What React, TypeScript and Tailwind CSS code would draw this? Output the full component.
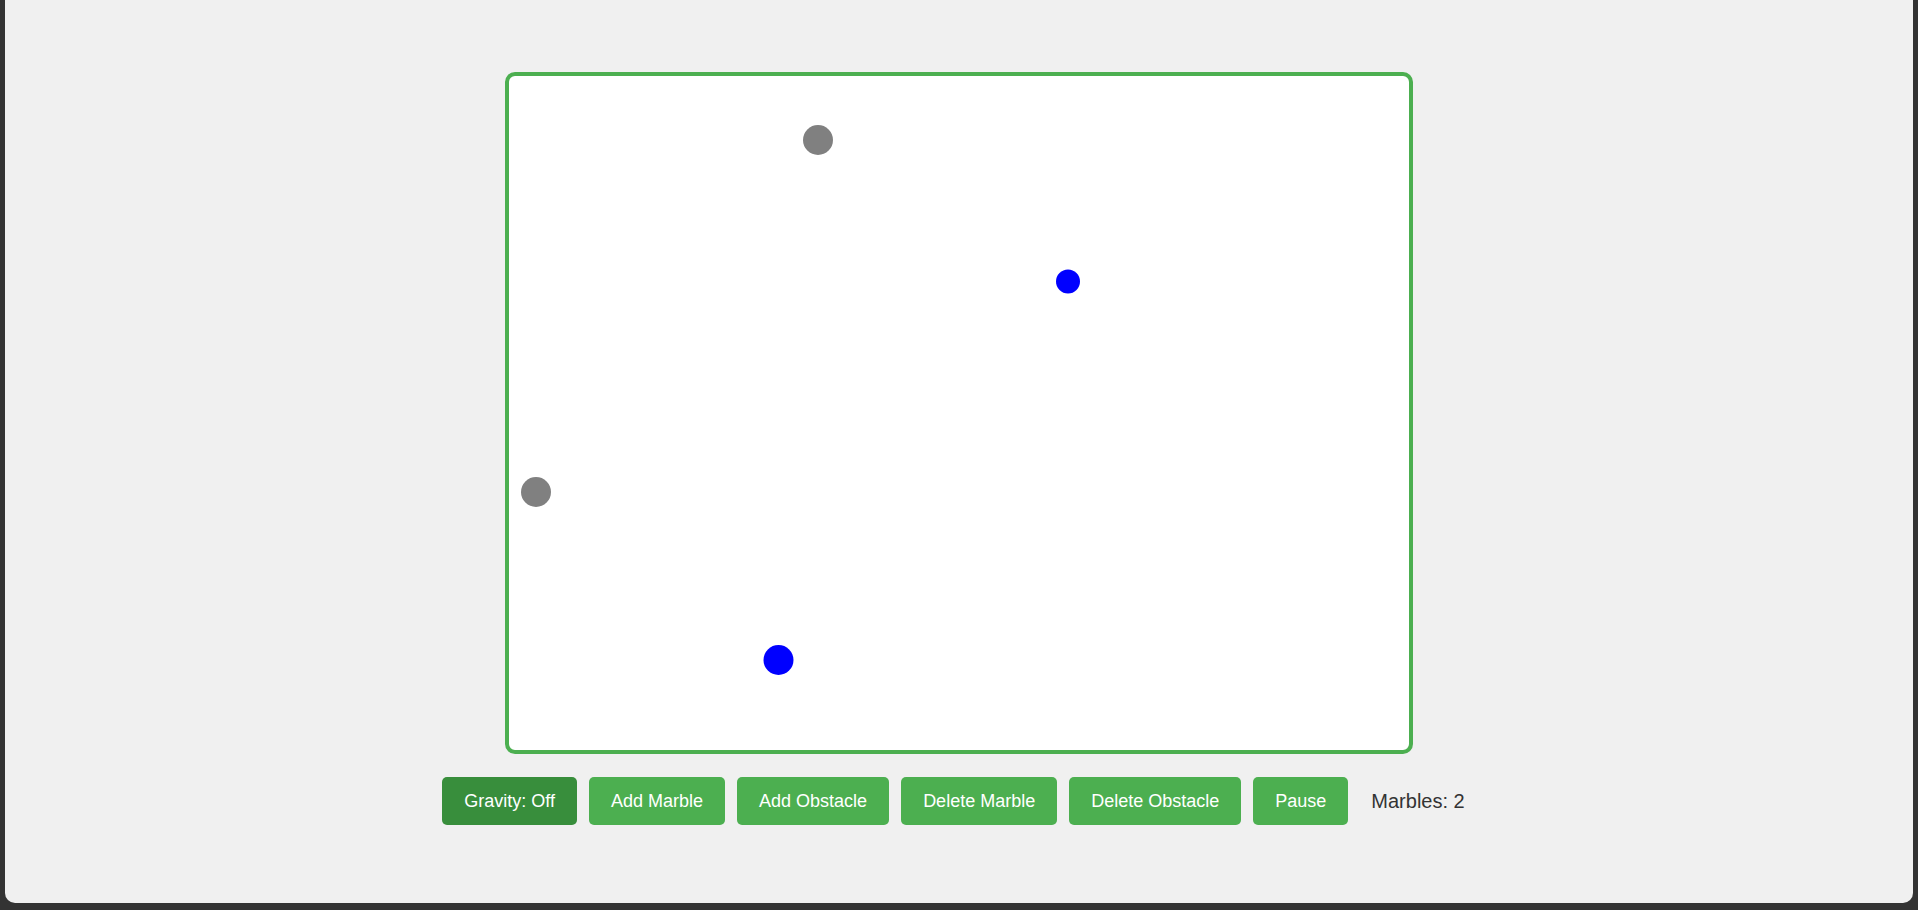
import React, { useState } from "react";

type Ball = { x: number; y: number; r: number; kind: "marble" | "obstacle" };

const balls: Ball[] = [
  { x: 309, y: 64, r: 15, kind: "obstacle" },
  { x: 559, y: 205.5, r: 12, kind: "marble" },
  { x: 27, y: 416, r: 15, kind: "obstacle" },
  { x: 269.5, y: 584, r: 15, kind: "marble" },
];

export default function App() {
  const [gravity, setGravity] = useState(false);
  const [paused, setPaused] = useState(false);
  const marbles = balls.filter((b) => b.kind === "marble").length;

  const btn =
    "h-[48px] px-[22px] rounded-[5px] text-white text-[18px] leading-none bg-[#4caf50] hover:bg-[#45a049]";

  return (
    <div className="h-[910px] w-full bg-[#333333] px-[5px] pb-[7px] font-['Liberation_Sans',Arial,sans-serif]">
      <div className="h-full bg-[#f0f0f0] rounded-b-[10px] flex flex-col items-center pt-[72px]">
        {/* play field */}
        <div className="w-[908px] h-[682px] border-4 border-[#4caf50] rounded-[10px] bg-white overflow-hidden">
          <svg width="900" height="674" viewBox="0 0 900 674">
            {balls.map((b, i) => (
              <circle
                key={i}
                cx={b.x}
                cy={b.y}
                r={b.r}
                fill={b.kind === "marble" ? "#0000ff" : "#808080"}
              />
            ))}
          </svg>
        </div>

        {/* controls */}
        <div className="mt-[23px] flex items-center gap-[12px] pr-[11px]">
          <button
            className={btn + " !bg-[#388e3c]"}
            onClick={() => setGravity(!gravity)}
          >
            Gravity: {gravity ? "On" : "Off"}
          </button>
          <button className={btn}>Add Marble</button>
          <button className={btn}>Add Obstacle</button>
          <button className={btn}>Delete Marble</button>
          <button className={btn}>Delete Obstacle</button>
          <button className={btn} onClick={() => setPaused(!paused)}>
            {paused ? "Resume" : "Pause"}
          </button>
          <span className="ml-[11px] text-[20px] text-[#333333]">Marbles: {marbles}</span>
        </div>
      </div>
    </div>
  );
}
